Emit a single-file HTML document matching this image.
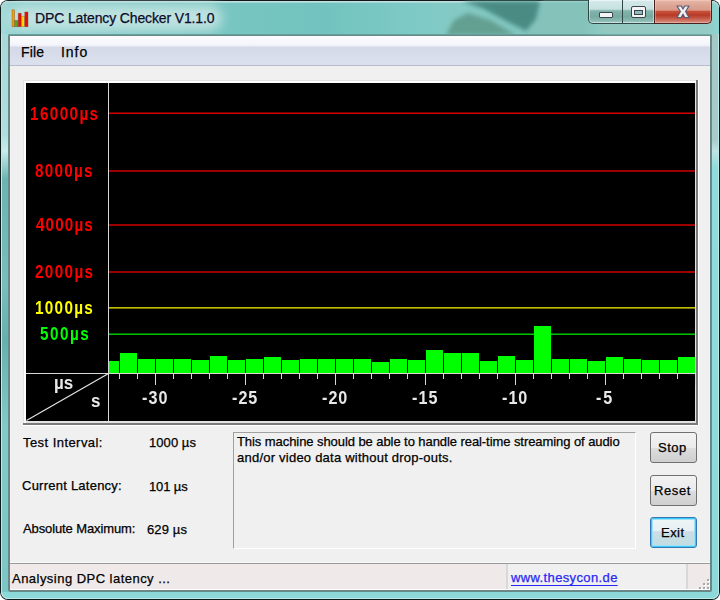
<!DOCTYPE html>
<html><head><meta charset="utf-8">
<style>
*{margin:0;padding:0;box-sizing:border-box}
html,body{width:720px;height:600px;overflow:hidden;background:#fff}
body{position:relative;font-family:"Liberation Sans",sans-serif}
.abs{position:absolute}
#win{position:absolute;left:0;top:0;width:720px;height:600px;border-radius:8px 8px 8px 8px;background:#0c1a1a;overflow:hidden}
#frame{position:absolute;left:1px;top:1px;right:1px;bottom:1px;border-radius:7px;background:#8cd7d7;box-shadow:inset 0 0 0 1px #bfeaea}
#tbar{position:absolute;left:1px;top:1px;width:718px;height:33px;border-radius:7px 7px 0 0;
 background:linear-gradient(90deg,#a6dada 0%,#8cd0ce 2%,#78c6c2 30%,#72c3bf 45%,#7ecac6 58%,#84cac4 63%,#80c6c0 75%,#82cac6 97%,#90d4d2 100%);box-shadow:inset 0 1px 0 #c8dcdc,inset 0 2px 0 #a4d8d8}
#glow{position:absolute;left:8px;top:5px;width:214px;height:26px;border-radius:13px;background:#bfe2e0;filter:blur(6px)}
#dark1{position:absolute;left:0;top:1px;width:720px;height:33px;filter:blur(2.5px);overflow:hidden}
#client{position:absolute;left:8px;top:34px;width:704px;height:558px;background:#6a8888;border-radius:2px;box-shadow:inset 0 1px 0 #64a09c}
#clientin{position:absolute;left:10px;top:36px;width:700px;height:554px;background:#f0f0f0}
.t{position:absolute;white-space:nowrap;color:#000}
.r{-webkit-text-stroke:0.25px currentColor}
</style></head><body>
<div id="win"><div id="frame"></div><div id="tbar"></div>
<svg class="abs" style="left:0;top:1px;filter:blur(2px)" width="720" height="34">
 <polygon points="462,0 540,0 536,18 526,30 506,20 484,8" fill="#4a8c84"/>
 <polygon points="446,34 454,19 468,12 490,19 516,34" fill="#64a092"/>
 <polygon points="542,0 592,0 592,34 518,34 526,30 538,18" fill="#84c2ba"/>
</svg>
<div id="glow"></div>
<div class="abs" style="left:2px;top:34px;width:6px;height:558px;background:linear-gradient(#a8d8d8 0%,#b0dede 18%,#c8ecec 21%,#6ab4b2 26%,#78bebe 45%,#66b0ae 55%,#82caca 70%,#7cc6c6 100%)"></div>
<div class="abs" style="left:712px;top:34px;width:6px;height:558px;background:linear-gradient(#a4c8c6 0%,#a8ccca 19%,#c0e4e4 21%,#8edcdc 24%,#8cdada 100%)"></div>
</div>
<div id="client"></div>
<div id="clientin"></div>

<svg class="abs" style="left:8px;top:6px" width="24" height="24" viewBox="0 0 24 24">
 <g stroke="#8a4a20" stroke-width="0.6" stroke-opacity="0.6">
 <rect x="4" y="3.8" width="2.6" height="17" fill="#e8a010"/>
 <rect x="6.6" y="14.4" width="3.4" height="6.4" fill="#50a828"/>
 <rect x="10.2" y="7.2" width="3" height="13.6" fill="#e01010"/>
 <rect x="13.8" y="10.2" width="2.6" height="10.4" fill="#f8e000"/>
 <rect x="16.8" y="6" width="3.2" height="14.8" fill="#e80c0c"/>
 </g>
</svg>

<div class="abs" style="left:580px;top:22px;width:132px;height:12px;background:linear-gradient(90deg,rgba(140,200,192,0) 0%,#92c8c0 20%,#96ccc6 100%);filter:blur(1px)"></div>
<div class="abs" style="left:588px;top:0;width:67px;height:24px;border:1px solid #2e4848;border-top:none;border-radius:0 0 0 5px;background:linear-gradient(#d6eaea 0%,#c6e0e0 40%,#84b4ac 47%,#76aaa0 72%,#88b8b0 88%,#a2cac4 100%);box-shadow:inset 0 0 0 1px rgba(255,255,255,.45)"></div>
<div class="abs" style="left:622px;top:0;width:1px;height:23px;background:#2e4848"></div>
<div class="abs" style="left:654px;top:0;width:58px;height:24px;border:1px solid #4a2020;border-top:none;border-radius:0 0 5px 0;background:linear-gradient(#e8b8a8 0%,#dca494 25%,#d89a88 44%,#c8503a 50%,#b83a28 66%,#c45a48 80%,#d89484 100%);box-shadow:inset 0 0 0 1px rgba(255,220,210,.35)"></div>
<div class="abs" style="left:599px;top:12px;width:14px;height:6px;border:1px solid #3a4450;background:#f4f4f4;border-radius:1px"></div>
<div class="abs" style="left:631px;top:6px;width:15px;height:12px;border:1px solid #3a4450;border-radius:2px;background:#f4f4f4"></div>
<div class="abs" style="left:634px;top:10px;width:9px;height:5px;border:1px solid #3a4450;background:#90b8b4"></div>
<svg class="abs" style="left:674px;top:3px" width="18" height="17" viewBox="0 0 18 17">
 <path d="M3 3 L7.2 3 L9 6 L10.8 3 L15 3 L11.6 8.5 L15 14.5 L10.8 14.5 L9 11.2 L7.2 14.5 L3 14.5 L6.4 8.5 Z" fill="#f0f0f2" stroke="#5a5a70" stroke-width="1.2" stroke-linejoin="round"/>
</svg>

<div class="abs" style="left:10px;top:36px;width:700px;height:30px;background:linear-gradient(#fcfcfe 0%,#f4f5fa 30%,#e6e9f2 36%,#d4d9e8 37%,#dde1ee 100%);border-bottom:1px solid #b6bccc"></div>

<div class="abs" style="left:23px;top:80px;width:676px;height:346px;background:#fff"></div>
<div class="abs" style="left:23px;top:80px;width:675px;height:345px;background:#e3e3e3"></div>
<div class="abs" style="left:24px;top:81px;width:674px;height:344px;background:#fff"></div>
<div class="abs" style="left:696px;top:80px;width:2px;height:345px;background:#7a7a7a"></div>
<div class="abs" style="left:23px;top:423px;width:675px;height:2px;background:#7a7a7a"></div>
<div class="abs" style="left:26px;top:421px;width:670px;height:2px;background:#e3e3e3"></div>
<div class="abs" style="left:695px;top:83px;width:1px;height:340px;background:#e3e3e3"></div>
<div class="abs" style="left:26px;top:83px;width:669px;height:338px;background:#000"></div>

<svg class="abs" style="left:0;top:0" width="720" height="600" shape-rendering="crispEdges">
 <rect x="108" y="112" width="587" height="1" fill="#700000"/>
 <rect x="108" y="113" width="587" height="1" fill="#d40000"/>
 <rect x="108" y="170" width="587" height="2" fill="#9c0000"/>
 <rect x="108" y="224" width="587" height="2" fill="#9c0000"/>
 <rect x="108" y="271" width="587" height="2" fill="#9c0000"/>
 <rect x="108" y="307" width="587" height="1" fill="#c0c000"/>
 <rect x="108" y="308" width="587" height="1" fill="#787800"/>
 <rect x="108" y="333" width="587" height="1" fill="#006c00"/>
 <rect x="108" y="334" width="587" height="1" fill="#00c000"/>
 <g fill="#00ff00"><rect x="109" y="361" width="10" height="12"/><rect x="120" y="353" width="17" height="20"/><rect x="138" y="359" width="17" height="14"/><rect x="156" y="359" width="17" height="14"/><rect x="174" y="359" width="17" height="14"/><rect x="192" y="360" width="17" height="13"/><rect x="210" y="356" width="17" height="17"/><rect x="228" y="360" width="17" height="13"/><rect x="246" y="359" width="17" height="14"/><rect x="264" y="357" width="17" height="16"/><rect x="282" y="360" width="17" height="13"/><rect x="300" y="359" width="17" height="14"/><rect x="318" y="359" width="17" height="14"/><rect x="336" y="359" width="17" height="14"/><rect x="354" y="359" width="17" height="14"/><rect x="372" y="362" width="17" height="11"/><rect x="390" y="359" width="17" height="14"/><rect x="408" y="360" width="17" height="13"/><rect x="426" y="350" width="17" height="23"/><rect x="444" y="353" width="17" height="20"/><rect x="462" y="353" width="17" height="20"/><rect x="480" y="361" width="17" height="12"/><rect x="498" y="356" width="17" height="17"/><rect x="516" y="360" width="17" height="13"/><rect x="534" y="326" width="17" height="47"/><rect x="552" y="359" width="17" height="14"/><rect x="570" y="359" width="17" height="14"/><rect x="588" y="361" width="17" height="12"/><rect x="606" y="357" width="17" height="16"/><rect x="624" y="359" width="17" height="14"/><rect x="642" y="360" width="17" height="13"/><rect x="660" y="360" width="17" height="13"/><rect x="678" y="357" width="17" height="16"/></g>
 <rect x="108" y="83" width="1" height="338" fill="#d8d8d8"/>
 <rect x="26" y="373" width="669" height="1" fill="#d8d8d8"/>
 <g fill="#d8d8d8"><rect x="119" y="374" width="1" height="5"/><rect x="137" y="374" width="1" height="5"/><rect x="155" y="374" width="1" height="11"/><rect x="173" y="374" width="1" height="5"/><rect x="191" y="374" width="1" height="5"/><rect x="209" y="374" width="1" height="5"/><rect x="227" y="374" width="1" height="5"/><rect x="245" y="374" width="1" height="11"/><rect x="263" y="374" width="1" height="5"/><rect x="281" y="374" width="1" height="5"/><rect x="299" y="374" width="1" height="5"/><rect x="317" y="374" width="1" height="5"/><rect x="335" y="374" width="1" height="11"/><rect x="353" y="374" width="1" height="5"/><rect x="371" y="374" width="1" height="5"/><rect x="389" y="374" width="1" height="5"/><rect x="407" y="374" width="1" height="5"/><rect x="425" y="374" width="1" height="11"/><rect x="443" y="374" width="1" height="5"/><rect x="461" y="374" width="1" height="5"/><rect x="479" y="374" width="1" height="5"/><rect x="497" y="374" width="1" height="5"/><rect x="515" y="374" width="1" height="11"/><rect x="533" y="374" width="1" height="5"/><rect x="551" y="374" width="1" height="5"/><rect x="569" y="374" width="1" height="5"/><rect x="587" y="374" width="1" height="5"/><rect x="605" y="374" width="1" height="11"/><rect x="623" y="374" width="1" height="5"/><rect x="641" y="374" width="1" height="5"/><rect x="659" y="374" width="1" height="5"/><rect x="677" y="374" width="1" height="5"/><rect x="695" y="374" width="1" height="11"/></g>
 <line x1="26.5" y1="420.5" x2="108.5" y2="373.5" stroke="#e4e4e4" stroke-width="1.2" shape-rendering="auto"/>
</svg>

<div class="abs" style="left:233px;top:432px;width:403px;height:117px;border-top:1px solid #a0a0a0;border-left:1px solid #a0a0a0;border-right:1px solid #fff;border-bottom:1px solid #fff"></div>

<div class="abs" style="left:650px;top:432px;width:47px;height:31px;border:1px solid #707070;border-radius:3px;background:linear-gradient(#f2f2f2 0%,#ebebeb 50%,#dddddd 51%,#cfcfcf 100%)"></div>
<div class="abs" style="left:650px;top:475px;width:47px;height:31px;border:1px solid #707070;border-radius:3px;background:linear-gradient(#f2f2f2 0%,#ebebeb 50%,#dddddd 51%,#cfcfcf 100%)"></div>
<div class="abs" style="left:650px;top:517px;width:47px;height:31px;border:1px solid #3278b4;border-radius:3px;background:linear-gradient(#f0f5f7 0%,#e8f0f3 44%,#d2d8e8 47%,#d0dce8 52%,#c6dee4 56%,#c2dce2 100%);box-shadow:inset 0 0 0 1px #3ccaf8,inset 0 0 0 2px #9ee0f6"></div>

<div class="abs" style="left:10px;top:562px;width:700px;height:1px;background:#fafafa"></div>
<div class="abs" style="left:10px;top:563px;width:700px;height:27px;background:#efe9ea;border-top:1px solid #999;border-bottom:1px solid #fff"></div>
<div class="abs" style="left:506px;top:564px;width:181px;height:25px;background:#f0f0f0;border-left:2px solid #d8d8d8"></div>
<div class="abs" style="left:686px;top:564px;width:2px;height:25px;background:#d8d8d8"></div>
<svg class="abs" style="left:697px;top:577px" width="13" height="13">
 <g fill="#fff"><rect x="11" y="3" width="2" height="2"/><rect x="7" y="7" width="2" height="2"/><rect x="11" y="7" width="2" height="2"/><rect x="3" y="11" width="2" height="2"/><rect x="7" y="11" width="2" height="2"/><rect x="11" y="11" width="2" height="2"/></g>
 <g fill="#a8a8a8"><rect x="10" y="2" width="2" height="2"/><rect x="6" y="6" width="2" height="2"/><rect x="10" y="6" width="2" height="2"/><rect x="2" y="10" width="2" height="2"/><rect x="6" y="10" width="2" height="2"/><rect x="10" y="10" width="2" height="2"/></g>
</svg>

<div class="t r" style="left:35.00px;top:10.00px;font-size:14px;line-height:17px;font-weight:normal;color:#0c0c28;letter-spacing:-0.132px;transform-origin:0 0;transform:none;">DPC Latency Checker V1.1.0</div>
<div class="t r" style="left:21.00px;top:44.00px;font-size:14px;line-height:17px;font-weight:normal;color:#000;letter-spacing:0.2px;transform-origin:0 0;transform:none;">File</div>
<div class="t r" style="left:61.00px;top:44.00px;font-size:14px;line-height:17px;font-weight:normal;color:#000;letter-spacing:0.967px;transform-origin:0 0;transform:none;">Info</div>
<div class="t" style="left:30.00px;top:104.00px;font-size:17px;line-height:20px;font-weight:bold;color:#ff0000;letter-spacing:1.519px;transform-origin:0 0;transform:scale(0.9,1.06);">16000µs</div>
<div class="t" style="left:35.00px;top:161.00px;font-size:17px;line-height:20px;font-weight:bold;color:#ff0000;letter-spacing:1.356px;transform-origin:0 0;transform:scale(0.9,1.06);">8000µs</div>
<div class="t" style="left:36.00px;top:215.00px;font-size:17px;line-height:20px;font-weight:bold;color:#ff0000;letter-spacing:1.222px;transform-origin:0 0;transform:scale(0.9,1.06);">4000µs</div>
<div class="t" style="left:35.00px;top:262.00px;font-size:17px;line-height:20px;font-weight:bold;color:#ff0000;letter-spacing:1.489px;transform-origin:0 0;transform:scale(0.9,1.06);">2000µs</div>
<div class="t" style="left:35.00px;top:298.00px;font-size:17px;line-height:20px;font-weight:bold;color:#ffff00;letter-spacing:1.444px;transform-origin:0 0;transform:scale(0.9,1.06);">1000µs</div>
<div class="t" style="left:40.00px;top:324.00px;font-size:17px;line-height:20px;font-weight:bold;color:#00ff00;letter-spacing:1.611px;transform-origin:0 0;transform:scale(0.9,1.06);">500µs</div>
<div class="t" style="left:54.00px;top:373.00px;font-size:17px;line-height:20px;font-weight:bold;color:#e8e8e8;letter-spacing:0px;transform-origin:0 0;transform:scale(1,1.04);">µs</div>
<div class="t" style="left:91.00px;top:391.00px;font-size:17px;line-height:20px;font-weight:bold;color:#e8e8e8;letter-spacing:0px;transform-origin:0 0;transform:scale(1,1.04);">s</div>
<div class="t" style="left:142.00px;top:388.00px;font-size:17px;line-height:20px;font-weight:bold;color:#e8e8e8;letter-spacing:1.158px;transform-origin:0 0;transform:scale(0.95,1.06);">-30</div>
<div class="t" style="left:232.00px;top:388.00px;font-size:17px;line-height:20px;font-weight:bold;color:#e8e8e8;letter-spacing:1.053px;transform-origin:0 0;transform:scale(0.95,1.06);">-25</div>
<div class="t" style="left:322.00px;top:388.00px;font-size:17px;line-height:20px;font-weight:bold;color:#e8e8e8;letter-spacing:1.053px;transform-origin:0 0;transform:scale(0.95,1.06);">-20</div>
<div class="t" style="left:412.00px;top:388.00px;font-size:17px;line-height:20px;font-weight:bold;color:#e8e8e8;letter-spacing:1.158px;transform-origin:0 0;transform:scale(0.95,1.06);">-15</div>
<div class="t" style="left:502.00px;top:388.00px;font-size:17px;line-height:20px;font-weight:bold;color:#e8e8e8;letter-spacing:1.053px;transform-origin:0 0;transform:scale(0.95,1.06);">-10</div>
<div class="t" style="left:596.00px;top:388.00px;font-size:17px;line-height:20px;font-weight:bold;color:#e8e8e8;letter-spacing:1.895px;transform-origin:0 0;transform:scale(0.95,1.06);">-5</div>
<div class="t r" style="left:23.00px;top:435.00px;font-size:13px;line-height:16px;font-weight:normal;color:#000;letter-spacing:0.442px;transform-origin:0 0;transform:none;">Test Interval:</div>
<div class="t r" style="left:149.00px;top:435.00px;font-size:13px;line-height:16px;font-weight:normal;color:#000;letter-spacing:0.067px;transform-origin:0 0;transform:none;">1000 µs</div>
<div class="t r" style="left:22.00px;top:478.00px;font-size:13px;line-height:16px;font-weight:normal;color:#000;letter-spacing:0.24px;transform-origin:0 0;transform:none;">Current Latency:</div>
<div class="t r" style="left:149.00px;top:479.00px;font-size:13px;line-height:16px;font-weight:normal;color:#000;letter-spacing:-0.12px;transform-origin:0 0;transform:none;">101 µs</div>
<div class="t r" style="left:23.00px;top:521.00px;font-size:13px;line-height:16px;font-weight:normal;color:#000;letter-spacing:-0.106px;transform-origin:0 0;transform:none;">Absolute Maximum:</div>
<div class="t r" style="left:147.00px;top:522.00px;font-size:13px;line-height:16px;font-weight:normal;color:#000;letter-spacing:0.12px;transform-origin:0 0;transform:none;">629 µs</div>
<div class="t r" style="left:237.00px;top:434.00px;font-size:13px;line-height:16px;font-weight:normal;color:#000;letter-spacing:-0.072px;transform-origin:0 0;transform:none;">This machine should be able to handle real-time streaming of audio</div>
<div class="t r" style="left:237.00px;top:450.00px;font-size:13px;line-height:16px;font-weight:normal;color:#000;letter-spacing:0.229px;transform-origin:0 0;transform:none;">and/or video data without drop-outs.</div>
<div class="t r" style="left:658.00px;top:440.00px;font-size:13px;line-height:16px;font-weight:normal;color:#000;letter-spacing:0.533px;transform-origin:0 0;transform:none;">Stop</div>
<div class="t r" style="left:654.00px;top:483.00px;font-size:13px;line-height:16px;font-weight:normal;color:#000;letter-spacing:0.6px;transform-origin:0 0;transform:none;">Reset</div>
<div class="t r" style="left:661.00px;top:525.00px;font-size:13px;line-height:16px;font-weight:normal;color:#000;letter-spacing:0.467px;transform-origin:0 0;transform:none;">Exit</div>
<div class="t r" style="left:12.00px;top:571.00px;font-size:13px;line-height:16px;font-weight:normal;color:#000;letter-spacing:0.469px;transform-origin:0 0;transform:none;">Analysing DPC latency ...</div>
<div class="t r" style="left:511.00px;top:570.00px;font-size:13px;line-height:16px;font-weight:normal;color:#2828f0;letter-spacing:0.371px;transform-origin:0 0;transform:none;text-decoration:underline;text-underline-offset:3px;">www.thesycon.de</div>
</body></html>
